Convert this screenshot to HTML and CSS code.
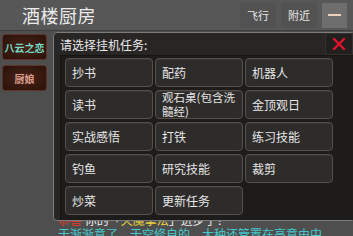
FILE: index.html
```html
<!DOCTYPE html>
<html lang="zh">
<head>
<meta charset="utf-8">
<link rel="stylesheet" href="styles.css">
</head>
<body>
<div class="app">
  <header class="topbar">
    <h1 class="title">酒楼厨房</h1>
    <nav class="nav">
      <span class="nav-btn">飞行</span>
      <span class="nav-btn">附近</span>
      <span class="min-btn"><span class="dash"></span></span>
    </nav>
  </header>
  <div class="main">
    <aside class="side">
      <div class="side-btn teal">八云之恋</div>
      <div class="side-btn pink">厨娘</div>
    </aside>
    <div class="content">
      <div class="log">
        <p class="line"><span class="red">恭喜</span> 你的「<span class="yellow">天魔掌法</span>」进步了！</p>
        <p class="line cyan">于渐渐意了，于空修自的，大种还管置在高意由中</p>
      </div>
    </div>
  </div>
  <section class="modal">
    <div class="modal-head">
      <span class="modal-title">请选择挂机任务:</span>
      <span class="close">
        <svg width="14" height="14" viewBox="0 0 14 14"><path d="M2 2 L12 12 M12 2 L2 12" stroke="#e5122e" stroke-width="2.4" stroke-linecap="round"/></svg>
      </span>
    </div>
    <div class="task-box">
      <div class="grid">
        <div class="task">抄书</div>
        <div class="task">配药</div>
        <div class="task">机器人</div>
        <div class="task">读书</div>
        <div class="task two">观石桌(包含洗<br>髓经)</div>
        <div class="task">金顶观日</div>
        <div class="task">实战感悟</div>
        <div class="task">打铁</div>
        <div class="task">练习技能</div>
        <div class="task">钓鱼</div>
        <div class="task">研究技能</div>
        <div class="task">裁剪</div>
        <div class="task">炒菜</div>
        <div class="task">更新任务</div>
      </div>
    </div>
  </section>
</div>
</body>
</html>
```
FILE: styles.css
```css
* { box-sizing: border-box; margin: 0; padding: 0; }
html, body {
  width: 353px;
  height: 236px;
  overflow: hidden;
  background: #4e4e4e;
  font-family: "Noto Sans CJK SC", "Noto Sans", sans-serif;
}
.app {
  position: relative;
  width: 353px;
  height: 236px;
  overflow: hidden;
  background: #4e4e4e;
}
.topbar {
  height: 31px;
  background: #575757;
  border-bottom: 1px solid #3e3e3e;
  display: flex;
  align-items: center;
  justify-content: space-between;
  padding-left: 22px;
}
.title {
  font-size: 18px;
  font-weight: 400;
  color: #ebebeb;
  letter-spacing: 0.5px;
  line-height: 1;
}
.nav {
  display: flex;
  align-items: center;
  height: 100%;
  padding: 3px 6px 3px 0;
  gap: 5px;
}
.nav-btn {
  height: 25px;
  width: 36px;
  display: flex;
  align-items: center;
  justify-content: center;
  background: #525252;
  color: #e6e6e6;
  font-size: 11px;
}
.min-btn {
  width: 25px;
  height: 25px;
  background: #6e6e6e;
  display: flex;
  align-items: center;
  justify-content: center;
}
.dash {
  width: 13px;
  height: 2px;
  background: #ecd2bc;
}
.main {
  display: flex;
  height: 204px;
}
.side {
  width: 53px;
  padding: 3px 0 0 2px;
  display: flex;
  flex-direction: column;
  gap: 5px;
}
.side-btn {
  width: 45px;
  height: 26px;
  border: 1px solid #5e3326;
  border-radius: 3px;
  background: radial-gradient(ellipse at center, #4a2217 0%, #33170f 70%, #2a120c 100%);
  display: flex;
  align-items: center;
  justify-content: center;
  font-size: 10px;
  font-weight: 700;
}
.teal { color: #72dcc6; }
.pink { color: #d99c8c; }
.content {
  flex: 1;
  padding: 182px 0 0 5px;
}
.line {
  font-size: 12px;
  line-height: 14px;
  color: #eeeeee;
  white-space: nowrap;
}
.red { color: #e03a2a; }
.yellow { color: #e8d43a; }
.cyan { color: #44c8cc; }
.modal {
  position: absolute;
  left: 53px;
  top: 32px;
  width: 302px;
  height: 189px;
  background: #282625;
  border: 1px solid #7c7c7c;
  border-radius: 4px;
  display: flex;
  flex-direction: column;
}
.modal-head {
  height: 22px;
  display: flex;
  align-items: center;
  justify-content: space-between;
  padding-left: 6px;
}
.modal-title {
  font-size: 12px;
  color: #e8e8e8;
}
.close {
  width: 28px;
  height: 22px;
  margin-right: 1px;
  background: #221f1e;
  border: 1px solid #34302e;
  display: flex;
  align-items: center;
  justify-content: center;
}
.task-box {
  margin-left: 6px;
  flex: 1;
  background: #1e1c1b;
  border-top: 1px solid #161514;
  border-left: 1px solid #161514;
  padding: 2px 0 0 4px;
}
.grid {
  display: grid;
  grid-template-columns: repeat(3, 88px);
  grid-auto-rows: 29px;
  column-gap: 2px;
  row-gap: 3px;
}
.task {
  background: #2e2c2b;
  border: 1px solid #574e47;
  border-radius: 4px;
  box-shadow: inset 0 1px 0 rgba(255,255,255,0.05);
  color: #e6e6e6;
  font-size: 12px;
  line-height: 13px;
  padding-left: 6px;
  display: flex;
  align-items: center;
  white-space: nowrap;
}
.task.two {
  font-size: 11.5px;
  line-height: 13.5px;
}
```
